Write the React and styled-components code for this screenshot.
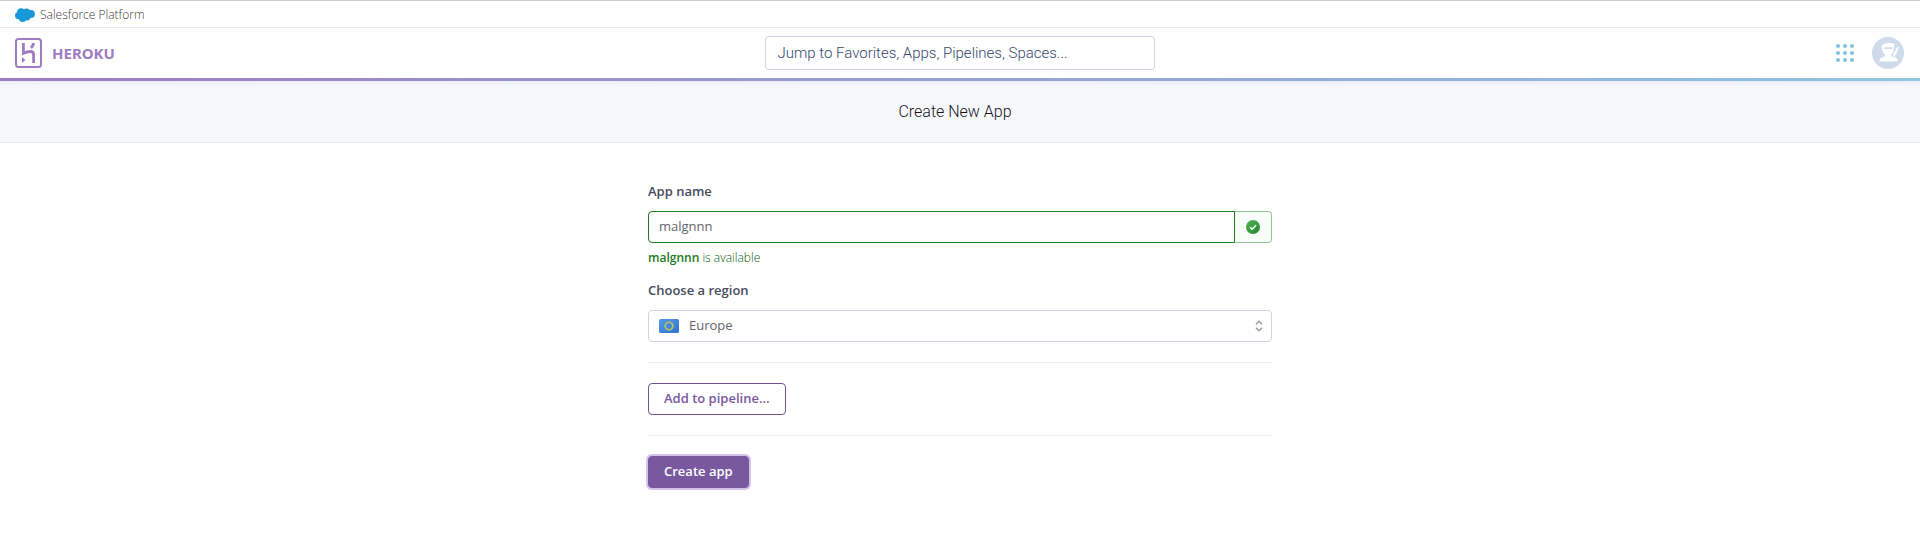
import React, { useState } from "react";
import styled, { createGlobalStyle } from "styled-components";

const GlobalStyle = createGlobalStyle`
  *, *::before, *::after { box-sizing: border-box; }
  body {
    margin: 0;
    background: #fff;
    color: #3f4350;
    font-family: "Open Sans", "Noto Sans", sans-serif;
    font-size: 13px;
    line-height: 20px;
  }
  button, input, select { font: inherit; color: inherit; margin: 0; }
`;

const PlatformBar = styled.div`
  display: flex;
  align-items: center;
  height: 28px;
  padding: 2px 15px 0;
  border-top: 1px solid #c9c9cb;
  border-bottom: 1px solid #e8e9ec;
`;

const PlatformLink = styled.a`
  display: flex;
  align-items: center;
  gap: 5px;
  font-size: 12px;
  font-weight: 300;
  color: #3c3a38;
  text-decoration: none;
`;

const Header = styled.header`
  display: grid;
  grid-template-columns: 1fr 390px 1fr;
  align-items: center;
  height: 50px;
  padding: 0 16px 0 15px;
`;

const Brand = styled.a`
  justify-self: start;
  display: flex;
  align-items: center;
  gap: 10px;
  font-family: "Noto Sans", sans-serif;
  font-size: 15px;
  font-weight: 700;
  color: #9e7cc1;
  text-decoration: none;
`;

const Search = styled.input`
  width: 100%;
  height: 34px;
  padding: 0 12px;
  border: 1px solid #cfd3e2;
  border-radius: 4px;
  background: #fff;
  font-family: Roboto, sans-serif;
  font-size: 15px;
  font-weight: 300;
  outline: none;
  &::placeholder { color: #35496c; opacity: 1; }
`;

const Tools = styled.div`
  justify-self: end;
  display: flex;
  align-items: center;
  gap: 18px;
`;

const IconButton = styled.button`
  display: flex;
  padding: 0;
  border: 0;
  background: none;
  cursor: pointer;
`;

const GradientRule = styled.div`
  height: 3px;
  background: linear-gradient(to right, #9e7cc1, #8fc6e0);
`;

const TitleBand = styled.div`
  display: flex;
  align-items: center;
  justify-content: center;
  height: 62px;
  padding-right: 10px;
  background: linear-gradient(#ecedf8, #f7f8fc 5px);
  border-bottom: 1px solid #e6e9f1;
`;

const Title = styled.h1`
  margin: 0;
  font-family: Roboto, sans-serif;
  font-size: 16px;
  font-weight: 300;
  color: #14141c;
`;

const Form = styled.form`
  width: 100%;
  max-width: 624px;
  margin: 0 auto;
  padding: 38px 0 60px;
`;

const Label = styled.label`
  display: block;
  margin-bottom: 10px;
  font-weight: 600;
  color: #474c5c;
`;

const NameGroup = styled.div`
  display: flex;
  height: 32px;
`;

const NameInput = styled.input`
  flex: 1;
  min-width: 0;
  padding: 0 10px 2px;
  border: 1px solid #1f7a1f;
  border-radius: 4px 0 0 4px;
  background: #fff;
  color: #62656c;
  outline: none;
`;

const NameStatus = styled.span`
  display: flex;
  align-items: center;
  justify-content: center;
  width: 37px;
  border: 1px solid #8fc793;
  border-left: 0;
  border-radius: 0 4px 4px 0;
  background: #f8fefa;
`;

const Help = styled.p`
  margin: 5px 0 12px;
  font-size: 12px;
  font-weight: 300;
  color: #0b5c12;
  strong { font-weight: 600; color: #1d7a22; }
`;

const RegionField = styled.div`
  position: relative;
`;

const RegionSelect = styled.select`
  display: block;
  width: 100%;
  height: 32px;
  padding: 0 32px 2px 40px;
  appearance: none;
  border: 1px solid #cfd3e2;
  border-radius: 4px;
  background: #fff;
  color: #62656c;
  outline: none;
`;

const FieldIcon = styled.span`
  position: absolute;
  top: 0;
  bottom: 0;
  ${(p) => (p.$side === "left" ? "left: 11px;" : "right: 9px;")}
  display: flex;
  align-items: center;
  pointer-events: none;
`;

const Divider = styled.hr`
  height: 1px;
  margin: 20px 0;
  border: 0;
  background: #ebecef;
`;

const Button = styled.button`
  display: block;
  height: 32px;
  padding: 0 15px 2px;
  border: 1px solid ${(p) => (p.$primary ? "#79589f" : "#6e5391")};
  border-radius: 4px;
  background: ${(p) => (p.$primary ? "#79589f" : "#fff")};
  box-shadow: ${(p) => (p.$primary ? "0 0 0 2px #d3c2ea" : "none")};
  color: ${(p) => (p.$primary ? "#fff" : "#79589f")};
  font-weight: 600;
  cursor: pointer;
`;

const Cloud = () => (
  <svg width="20" height="14" viewBox="0 0 20 14" aria-hidden="true">
    <g fill="#1798d8">
      <circle cx="6" cy="4" r="3.8" />
      <circle cx="11.4" cy="4" r="3.4" />
      <circle cx="15.8" cy="6" r="4.1" />
      <circle cx="3.6" cy="7.6" r="3.6" />
      <circle cx="7.6" cy="10.2" r="3.7" />
      <circle cx="12" cy="9.3" r="3.3" />
      <path d="M4 4h12v6H4z" />
    </g>
  </svg>
);

const HerokuMark = () => (
  <svg width="27" height="30" viewBox="0 0 27 30" aria-hidden="true">
    <rect x="1" y="1" width="25" height="28" rx="2.5" fill="none" stroke="#9e7cc1" strokeWidth="2" />
    <g fill="none" stroke="#9e7cc1" strokeWidth="2.8">
      <path d="M8.4 5v10.2c2.6-1.2 5-1.7 7-1.7 2.4 0 3.2 1.4 3.2 3.2V25" />
      <path d="M18.6 5c-.2 1.8-1.1 3.5-2.6 5" />
    </g>
    <path d="M7 19v6l3.4-3z" fill="#9e7cc1" />
  </svg>
);

const AppsGrid = () => (
  <svg width="18" height="18" viewBox="0 0 18 18" fill="#85c0e2" aria-hidden="true">
    {[2, 9, 16].map((y) => [2, 9, 16].map((x) => <circle key={`${x}-${y}`} cx={x} cy={y} r="2" />))}
  </svg>
);

const Avatar = () => (
  <svg width="32" height="32" viewBox="0 0 32 32" aria-hidden="true">
    <circle cx="16" cy="16" r="16" fill="#cfdaea" />
    <g fill="#fff">
      <path d="M9.600 8.600c2.400-2.800 9.400-3.200 12.800-1.400l-.6 5.200c-.4 2.800-1.600 4.400-2.600 5.400v1.400l4.400 1.400c1.400.6 2 1.800 2 3.800H7.600c0-2.200.6-3.400 2-3.800l3.600-1.400v-1.400c-1.800-1.400-2.800-3-3.100-5z" />
      <path d="M25.400 9.500l1.800.8-4.600 9.400-2-.8z" />
    </g>
    <path d="M12.400 10.300h8v1.600h-8z" fill="#cfdaea" />
  </svg>
);

const CheckBadge = () => (
  <svg width="14" height="14" viewBox="0 0 14 14" role="img" aria-label="Available">
    <defs>
      <linearGradient id="badge" x1="0" y1="0" x2="1" y2="1">
        <stop offset="0" stopColor="#56b257" />
        <stop offset="1" stopColor="#1f8a2a" />
      </linearGradient>
    </defs>
    <circle cx="7" cy="7" r="7" fill="url(#badge)" />
    <path d="M4 7.300l2.100 2 4-4" fill="none" stroke="#fff" strokeWidth="1.500" />
  </svg>
);

const EuropeFlag = () => (
  <svg width="20" height="14" viewBox="0 0 20 14" aria-hidden="true">
    <defs>
      <linearGradient id="flag" x1="0" y1="0" x2="1" y2="1">
        <stop offset="0" stopColor="#559bea" />
        <stop offset="1" stopColor="#3272d0" />
      </linearGradient>
    </defs>
    <rect width="20" height="14" rx="1.500" fill="url(#flag)" />
    <circle cx="10" cy="7" r="3.800" fill="none" stroke="#c5c94f" strokeWidth="1.800" strokeDasharray="1.600 0.390" />
  </svg>
);

const Sorter = () => (
  <svg width="8" height="12" viewBox="0 0 8 12" fill="none" stroke="#989ca5" strokeWidth="1.500" aria-hidden="true">
    <path d="M1 4.300L4 1.300l3 3M1 7.700l3 3 3-3" />
  </svg>
);

export default function App() {
  const [name, setName] = useState("malgnnn");
  return (
    <>
      <GlobalStyle />
      <PlatformBar>
        <PlatformLink href="#platform"><Cloud />Salesforce Platform</PlatformLink>
      </PlatformBar>
      <Header>
        <Brand href="#home"><HerokuMark />HEROKU</Brand>
        <Search type="text" aria-label="Jump to" placeholder="Jump to Favorites, Apps, Pipelines, Spaces..." />
        <Tools>
          <IconButton type="button" aria-label="Apps"><AppsGrid /></IconButton>
          <IconButton type="button" aria-label="Account"><Avatar /></IconButton>
        </Tools>
      </Header>
      <GradientRule />
      <main>
        <TitleBand><Title>Create New App</Title></TitleBand>
        <Form onSubmit={(e) => e.preventDefault()}>
          <Label htmlFor="app-name">App name</Label>
          <NameGroup>
            <NameInput id="app-name" type="text" value={name} onChange={(e) => setName(e.target.value)} />
            <NameStatus><CheckBadge /></NameStatus>
          </NameGroup>
          <Help><strong>{name}</strong> is available</Help>
          <Label htmlFor="region">Choose a region</Label>
          <RegionField>
            <RegionSelect id="region"><option>Europe</option></RegionSelect>
            <FieldIcon $side="left"><EuropeFlag /></FieldIcon>
            <FieldIcon $side="right"><Sorter /></FieldIcon>
          </RegionField>
          <Divider />
          <Button type="button">Add to pipeline...</Button>
          <Divider />
          <Button type="submit" $primary>Create app</Button>
        </Form>
      </main>
    </>
  );
}
